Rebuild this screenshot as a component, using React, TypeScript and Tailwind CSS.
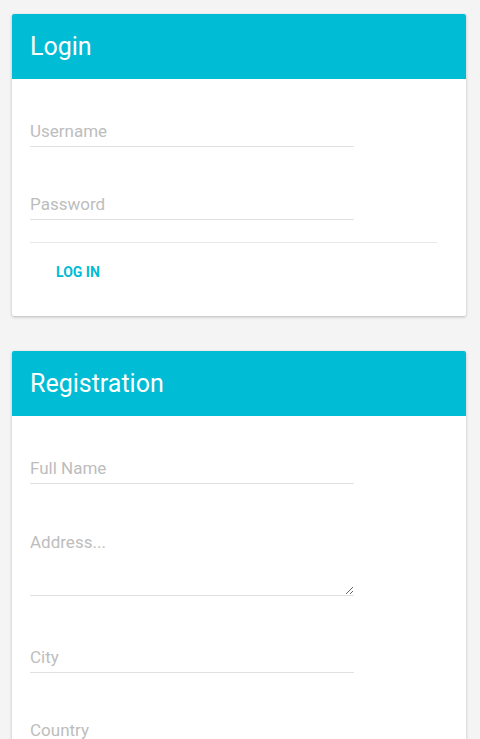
import React from "react";

const font = { fontFamily: "Roboto, 'Noto Sans', sans-serif" };

const Field = ({ placeholder, className = "" }: { placeholder: string; className?: string }) => (
  <input
    type="text"
    placeholder={placeholder}
    className={`block h-[31px] w-[324px] border-b border-[#e0e0e0] bg-transparent text-[17px] text-[#424242] outline-none placeholder:text-[#bdbdbd] ${className}`}
  />
);

const Card = ({ title, children }: { title: string; children: React.ReactNode }) => (
  <div className="mx-[12px] w-[454px] overflow-hidden rounded-[2px] bg-white shadow-[0_1px_3px_rgba(0,0,0,0.25)]">
    <div className="flex h-[65px] items-center bg-[#00bcd4] px-[18px]">
      <h2 className="text-[25px] font-normal leading-none text-white">{title}</h2>
    </div>
    <div className="px-[18px] pt-[37px]">{children}</div>
  </div>
);

export default function App() {
  return (
    <div className="min-h-[739px] bg-[#f4f4f4] pt-[14px]" style={font}>
      <Card title="Login">
        <Field placeholder="Username" />
        <Field placeholder="Password" className="mt-[42px]" />
        <div className="mt-[22px] mr-[11px] border-t border-[#e8e8e8]" />
        <button className="mt-[11px] mb-[26px] ml-[10px] h-[36px] px-[16px] text-[14px] font-bold uppercase text-[#00bcd4]">
          Log in
        </button>
      </Card>
      <div className="h-[35px]" />
      <Card title="Registration">
        <Field placeholder="Full Name" />
        <textarea
          placeholder="Address..."
          className="mt-[42px] block h-[70px] w-[324px] border-b border-[#e0e0e0] pt-[4px] text-[17px] text-[#424242] outline-none placeholder:text-[#bdbdbd]"
        />
        <Field placeholder="City" className="mt-[46px]" />
        <Field placeholder="Country" className="mt-[42px]" />
        <Field placeholder="Zip Code" className="mt-[42px] mb-[40px]" />
      </Card>
    </div>
  );
}
